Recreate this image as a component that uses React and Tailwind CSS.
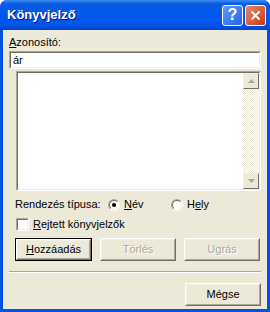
import React from 'react';

// Könyvjelző párbeszédablak - XP stílus
const Sunken = ({ className = '', children }) => (
  <div className={`border border-t-[#aca899] border-l-[#aca899] border-b-white border-r-white ${className}`}>
    <div className="h-full border border-t-[#716f64] border-l-[#716f64] border-b-[#f1efe2] border-r-[#f1efe2] bg-white">
      {children}
    </div>
  </div>
);

const Btn = ({ children, disabled, isDefault, className = '' }) => (
  <div className={`h-[23px] ${isDefault ? 'border border-black' : ''} ${className}`}>
    <div className="h-full border border-t-white border-l-white border-b-[#716f64] border-r-[#716f64]">
      <div className={`h-full flex items-center justify-center border border-t-[#f1efe2] border-l-[#f1efe2] border-b-[#aca899] border-r-[#aca899] ${disabled ? 'text-[#aca899] [text-shadow:1px_1px_#fff]' : 'text-black'}`}>
        {children}
      </div>
    </div>
  </div>
);

const Arrow = ({ up }) => (
  <div className="w-[16px] h-[16px] border border-t-[#f1efe2] border-l-[#f1efe2] border-b-[#716f64] border-r-[#716f64] bg-[#ece9d8] flex items-center justify-center">
    <svg width="7" height="4" viewBox="0 0 7 4">
      {up ? <path d="M3.5 0 L7 4 L0 4 Z" fill="#aca899" /> : <path d="M0 0 L7 0 L3.5 4 Z" fill="#aca899" />}
    </svg>
  </div>
);

const Radio = ({ checked }) => (
  <div className="w-[12px] h-[12px] rounded-full border border-t-[#aca899] border-l-[#aca899] border-b-white border-r-white">
    <div className="w-full h-full rounded-full border border-t-[#716f64] border-l-[#716f64] border-b-[#f1efe2] border-r-[#f1efe2] bg-white flex items-center justify-center">
      {checked && <div className="w-[4px] h-[4px] rounded-full bg-black" />}
    </div>
  </div>
);

export default function App() {
  return (
    <div className="w-[270px] h-[312px] flex flex-col bg-[#0054e3] rounded-t-[7px] overflow-hidden text-[11px] text-black" style={{ fontFamily: '"Liberation Sans", Arial, sans-serif' }}>
      {/* Címsor */}
      <div className="h-[30px] shrink-0 flex items-center pl-[7px] pr-[4px] bg-[linear-gradient(#3c8ff8_0%,#0a5ddf_12%,#0058ee_50%,#0055e8_85%,#0044c8_100%)]">
        <span className="flex-1 text-white font-bold text-[13px] [text-shadow:1px_1px_#0a1883]">Könyvjelző</span>
        <div className="flex gap-[2px]">
          <div className="w-[21px] h-[21px] rounded-[3px] border border-white bg-[linear-gradient(135deg,#5f9bfa,#2663e0)] flex items-center justify-center text-white font-bold text-[16px] leading-none">?</div>
          <div className="w-[21px] h-[21px] rounded-[3px] border border-white bg-[linear-gradient(135deg,#e98a6c,#c7391a)] flex items-center justify-center">
            <svg width="11" height="11" viewBox="0 0 11 11">
              <path d="M1.5 1.5 L9.5 9.5 M9.5 1.5 L1.5 9.5" stroke="#fff" strokeWidth="2" />
            </svg>
          </div>
        </div>
      </div>

      {/* Tartalom */}
      <div className="flex-1 mx-[3px] mb-[3px] bg-[#ece9d8] flex flex-col px-[6px] pt-[6px]">
        <div className="h-[13px] leading-[13px]"><span className="underline">A</span>zonosító:</div>
        <Sunken className="mt-[2px] h-[18px]">
          <div className="pl-[2px] leading-[14px]">ár</div>
        </Sunken>
        <Sunken className="ml-[7px] mt-[2px] h-[120px]">
          <div className="h-full flex justify-end">
            <div className="w-[16px] h-full flex flex-col bg-[conic-gradient(#fff_25%,#ece9d8_0_50%,#fff_0_75%,#ece9d8_0)] bg-[length:2px_2px]">
              <Arrow up />
              <div className="flex-1" />
              <Arrow />
            </div>
          </div>
        </Sunken>

        <div className="mt-[7px] ml-[6px] flex items-center h-[13px]">
          <span className="w-[93px]">Rendezés típusa:</span>
          <Radio checked />
          <span className="ml-[4px] w-[47px]"><span className="underline">N</span>év</span>
          <Radio />
          <span className="ml-[4px]">H<span className="underline">e</span>ly</span>
        </div>

        <div className="mt-[7px] ml-[7px] flex items-center h-[13px]">
          <Sunken className="w-[13px] h-[13px]" />
          <span className="ml-[4px]"><span className="underline">R</span>ejtett könyvjelzők</span>
        </div>

        <div className="mt-[7px] ml-[6px] flex gap-[8px]">
          <Btn isDefault className="w-[77px]"><span><span className="underline">H</span>ozzáadás</span></Btn>
          <Btn disabled className="w-[76px]">Törlés</Btn>
          <Btn disabled className="w-[76px]">Ugrás</Btn>
        </div>

        <div className="mt-[10px] border-t border-t-[#aca899] border-b border-b-white" />

        <div className="mt-[10px] flex justify-end">
          <Btn className="w-[76px]">Mégse</Btn>
        </div>
      </div>
    </div>
  );
}
